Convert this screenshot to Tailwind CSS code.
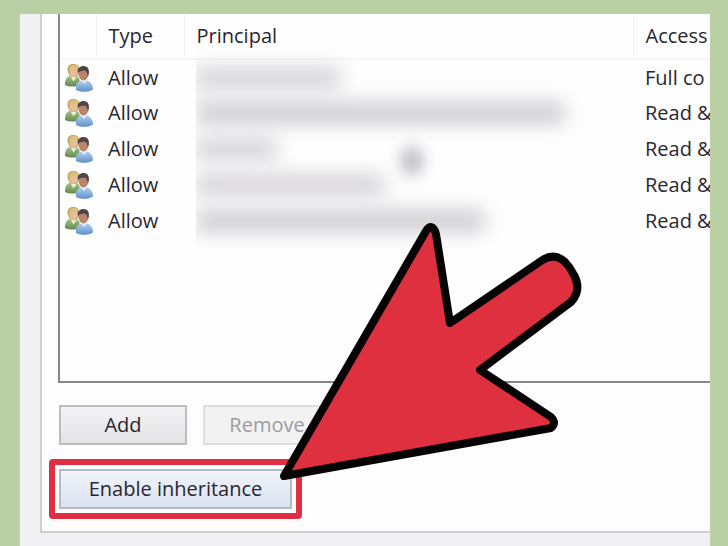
<!DOCTYPE html>
<html lang="en">
<head>
  <meta charset="UTF-8">
  <meta name="viewport" content="width=device-width, initial-scale=1.0">
  <title>Advanced Security Settings</title>
  <script src="https://cdn.jsdelivr.net/npm/@tailwindcss/browser@4"></script>
</head>
<body class="bg-[#b8d0a3] font-['Open_Sans','Noto_Sans',sans-serif] text-xl text-[#2b2630]">

  <!-- User group icon -->
  <svg class="absolute size-0">
    <defs>
      <linearGradient id="green" x1="0" y1="0" x2="0" y2="1">
        <stop offset="0" stop-color="#a9c48f" />
        <stop offset="1" stop-color="#5f8c4a" />
      </linearGradient>
      <linearGradient id="blue" x1="0" y1="0" x2="0" y2="1">
        <stop offset="0" stop-color="#b4d0f0" />
        <stop offset="1" stop-color="#5f8fcb" />
      </linearGradient>
    </defs>
    <symbol id="users" viewBox="0 0 30 30">
      <path d="M1 22c-.5-5 2-9 6-9.500h5c3 1 4 4 4 9.500-4 2-11 2-15 0z" fill="url(#green)" />
      <path d="M6.500 13.500l3 5 3.500-5z" fill="#f0ead6" />
      <path d="M3.500 7C3 2 7 .5 10 1c4 0 6 3 5 7 0 4-2 6-5 6-4 0-6-3-6.500-7z" fill="#c7a565" />
      <ellipse cx="9.500" cy="9" rx="4" ry="5" fill="#e4bf95" />
      <path d="M5 7c0-4 3-5 5-5 3 0 5 2 4.500 5-3-2-6-2-9.500 0z" fill="#d9c07d" />
      <path d="M12 27c-1-6 2-9 6-9.500h5c4 1 6 5 6 9-4 3-13 3-17 .5z" fill="url(#blue)" />
      <path d="M17 17l3 4 3-4z" fill="#e9f2fb" />
      <ellipse cx="19.500" cy="11" rx="5" ry="6.500" fill="#b98568" />
      <path d="M14 10c-1-5 2-7 5.500-7 4 0 6.500 3 5 9l-1 1c0-3-1-5-3-5.500-3 .5-5 .5-6.500 2.500z" fill="#4f4549" />
    </symbol>
  </svg>

  <div class="relative min-h-screen pt-3.5 pl-[19px] pr-[18px] flex overflow-hidden">
    <main class="flex-1 min-w-0 border-l border-[#dcc9a0] bg-[#f0eff1] pl-5 pb-3.5 overflow-hidden">
      <section class="border-l-2 border-b-2 border-[#cfcfd1] bg-[#fdfdfe] pl-4 pb-3">

        <!-- Permission entries -->
        <div class="h-[369px] border-l-2 border-b-2 border-[#868688] bg-[#fefefe] overflow-hidden">
          <table class="w-full table-fixed whitespace-nowrap text-left">
            <thead>
              <tr class="h-[45px] border-b-2 border-[#f6f5fb]">
                <td class="w-9 border-r border-[#f1f0f6]"></td>
                <th class="w-[88px] pl-3 font-normal border-r border-[#f1f0f6]">Type</th>
                <th class="pl-3 font-normal border-r border-[#f1f0f6]">Principal</th>
                <th class="w-[77px] pl-3 font-normal">Access</th>
              </tr>
            </thead>
            <tbody>
              <tr class="h-9">
                <td class="pl-1"><svg class="size-[30px]"><use href="#users" /></svg></td>
                <td class="pl-3">Allow</td>
                <td class="pl-3"><div class="overflow-x-clip"><div class="h-5 w-[144px] bg-[#d0ced2] blur-[10px]"></div></div></td>
                <td class="pl-3">Full co</td>
              </tr>
              <tr class="h-9">
                <td class="pl-1"><svg class="size-[30px]"><use href="#users" /></svg></td>
                <td class="pl-3">Allow</td>
                <td class="pl-3"><div class="overflow-x-clip"><div class="h-5 w-[368px] bg-[#c8c6ca] blur-[10px]"></div></div></td>
                <td class="pl-3">Read &amp;</td>
              </tr>
              <tr class="h-9">
                <td class="pl-1"><svg class="size-[30px]"><use href="#users" /></svg></td>
                <td class="pl-3">Allow</td>
                <td class="pl-3">
                  <div class="flex items-center overflow-x-clip">
                    <div class="h-5 w-20 bg-[#d0ced2] blur-[10px]"></div>
                    <div class="relative top-3 ml-[126px] h-7 w-5 rounded-full bg-[#b4b2b9] blur-[8px]"></div>
                  </div>
                </td>
                <td class="pl-3">Read &amp;</td>
              </tr>
              <tr class="h-9">
                <td class="pl-1"><svg class="size-[30px]"><use href="#users" /></svg></td>
                <td class="pl-3">Allow</td>
                <td class="pl-3"><div class="overflow-x-clip"><div class="h-5 w-[188px] bg-[#d0ced2] blur-[10px]"></div></div></td>
                <td class="pl-3">Read &amp;</td>
              </tr>
              <tr class="h-9">
                <td class="pl-1"><svg class="size-[30px]"><use href="#users" /></svg></td>
                <td class="pl-3">Allow</td>
                <td class="pl-3"><div class="overflow-x-clip"><div class="h-5 w-[288px] bg-[#c8c6ca] blur-[10px]"></div></div></td>
                <td class="pl-3">Read &amp;</td>
              </tr>
            </tbody>
          </table>
        </div>

        <!-- Buttons -->
        <div class="mt-[22px] flex gap-4 pl-px">
          <button type="button" class="h-10 w-32 border-2 border-[#bdbdc0] bg-linear-to-b from-[#f3f3f5] to-[#e4e4e6]">Add</button>
          <button type="button" disabled class="h-10 w-32 border-2 border-[#dedee0] bg-[#f2f2f3] text-[#9c9b9f]">Remove</button>
        </div>
        <div class="mt-3.5 -ml-[9px] w-fit rounded-[4px] border-[6px] border-[#e02f42] bg-[#fdfdfe] p-1">
          <button type="button" class="h-10 w-[233px] border-2 border-[#b3bac8] bg-linear-to-b from-[#f0f4fb] to-[#dae2f0]">Enable inheritance</button>
        </div>
      </section>
    </main>

    <!-- Pointer arrow -->
    <svg class="absolute left-0 top-0 pointer-events-none" width="728" height="546" viewBox="0 0 728 546" aria-hidden="true">
      <path d="M284 476L426 231Q431 223 435 231Q436 233 436.500 237L450 323L541 261Q554 252 565 262Q570 267 574 275Q582 290 571 302L480 370L551 417Q557 423 551 428Z"
        fill="#df3040" stroke="#060304" stroke-width="8" stroke-linejoin="round" />
    </svg>
  </div>
</body>
</html>
